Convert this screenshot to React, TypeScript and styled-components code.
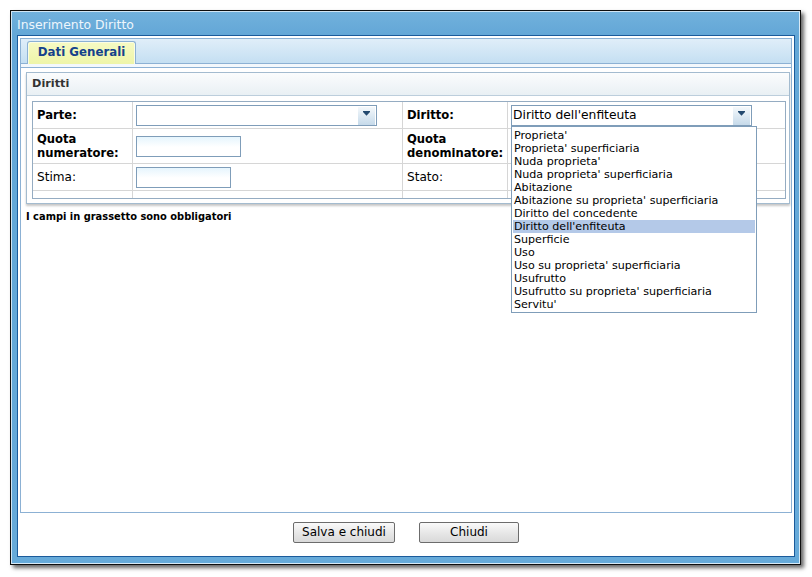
import React from "react";
import styled, { createGlobalStyle } from "styled-components";

const Global = createGlobalStyle`
  html, body { margin: 0; padding: 0; background: #ffffff; }
  body { font-family: "DejaVu Sans", Verdana, sans-serif; color: #000; }
  * { box-sizing: border-box; }
`;

const Page = styled.div`
  width: 812px;
  height: 577px;
  padding: 10px 0 0 10px;
  overflow: hidden;
`;

const Window = styled.div`
  width: 791px;
  height: 555px;
  border: 1px solid #0d0d0d;
  background: linear-gradient(to bottom, #72b1dc 0px, #63a7d7 24px, #66aad9 100%);
  box-shadow: 3px 3px 4px rgba(0, 0, 0, 0.6), inset 1px 1px 0 #d2e6f4,
    inset -1px -1px 0 #d8eaf6;
  padding: 0 5px 7px 6px;
  display: flex;
  flex-direction: column;
`;

const TitleBar = styled.div`
  height: 24px;
  padding-top: 3px;
  line-height: 21px;
  font-size: 12.4px;
  color: #eef6fc;
  white-space: nowrap;
`;

const Client = styled.div`
  flex: 1;
  background: #ffffff;
  border: 1px solid #1b5b9b;
  padding: 2px 2px 0 2px;
  display: flex;
  flex-direction: column;
`;

const TabPanel = styled.div`
  flex: 1;
  border: 1px solid #8cb1d4;
  display: flex;
  flex-direction: column;
`;

const TabStrip = styled.div`
  height: 25px;
  border-bottom: 1px solid #8cb1d4;
  background: linear-gradient(to bottom, #e0eef9, #c4dff2);
  padding-left: 6px;
  display: flex;
  align-items: flex-end;
`;

const Tab = styled.div`
  position: relative;
  z-index: 1;
  width: 109px;
  height: 23px;
  margin-bottom: -1px;
  border: 1px solid #8cb1d4;
  border-bottom: none;
  border-radius: 3px 3px 0 0;
  box-shadow: inset 1px 1px 0 #fbfde4, inset -1px 0 0 #fbfde4;
  background: linear-gradient(to bottom, #f6fac4, #eef5a8);
  color: #15428b;
  font-weight: bold;
  font-size: 11.8px;
  line-height: 21px;
  text-align: center;
`;

const StripSpacer = styled.div`
  height: 4px;
  background: #f3f8fc;
  border-bottom: 1px solid #8cb1d4;
`;

const Body = styled.div`
  flex: 1;
  padding: 4px 1px 0 5px;
  position: relative;
`;

const Fieldset = styled.div`
  border: 1px solid #a3bbcf;
  box-shadow: 0 2px 2px rgba(0, 0, 0, 0.22);
  background: #ffffff;
`;

const FieldsetHeader = styled.div`
  height: 23px;
  border-bottom: 1px solid #bccedc;
  background: linear-gradient(to bottom, #fbfcfd, #e9f0f4);
  padding-left: 5px;
  font-size: 11.3px;
  font-weight: bold;
  color: #333333;
  line-height: 22px;
`;

const TableWrap = styled.div`
  padding: 5px 3px 4px 5px;
`;

const FormGrid = styled.div`
  display: grid;
  grid-template-columns: 100px 270px 105px 277px;
  grid-template-rows: 27px 35px 27px 7px;
  border: 1px solid #95acc2;
`;

const Cell = styled.div<{ $lastCol?: boolean; $lastRow?: boolean; $pad?: number }>`
  display: flex;
  align-items: center;
  padding-left: ${(p) => p.$pad ?? 4}px;
  border-right: ${(p) => (p.$lastCol ? "none" : "1px solid #d6d6d6")};
  border-bottom: ${(p) => (p.$lastRow ? "none" : "1px solid #d6d6d6")};
  position: relative;
`;

const Label = styled.span<{ $bold?: boolean }>`
  font-size: ${(p) => (p.$bold ? "11.6px" : "12.1px")};
  font-weight: ${(p) => (p.$bold ? "bold" : "normal")};
  line-height: 14px;
  color: #000;
`;

const SelectBox = styled.div`
  position: relative;
  width: 241px;
  height: 21px;
  border: 1px solid #7f9db9;
  background: #ffffff;
  display: flex;
`;

const SelectText = styled.div`
  flex: 1;
  padding-left: 1px;
  font-size: 12.3px;
  line-height: 19px;
  white-space: nowrap;
`;

const ArrowButton = styled.div`
  width: 17px;
  margin: 1px 1px 0 0;
  height: 18px;
  background: linear-gradient(to bottom, #f4f8fb, #c6daea);
  display: flex;
  align-items: center;
  justify-content: center;
  padding-bottom: 5px;
`;

const TextInput = styled.div<{ $w: number }>`
  width: ${(p) => p.$w}px;
  height: 21px;
  border: 1px solid #7f9db9;
  background: linear-gradient(to bottom, #e6f5fd 0px, #ffffff 10px);
`;

const DropList = styled.div`
  position: absolute;
  left: -1px;
  top: 20px;
  z-index: 5;
  width: 246px;
  border: 1px solid #7f9db9;
  background: #ffffff;
  padding: 2px 1px 1px 1px;
`;

const DropItem = styled.div<{ $selected?: boolean }>`
  height: 13px;
  line-height: 13px;
  font-size: 11.1px;
  padding-left: 1px;
  white-space: nowrap;
  background: ${(p) => (p.$selected ? "#b4c9e8" : "transparent")};
`;

const Note = styled.div`
  margin-top: 7px;
  font-size: 9.9px;
  font-weight: bold;
  line-height: 12px;
`;

const ButtonBar = styled.div`
  height: 43px;
  padding-top: 9px;
  display: flex;
  justify-content: center;
  gap: 24px;
`;

const Button = styled.button<{ $w: number }>`
  width: ${(p) => p.$w}px;
  height: 21px;
  padding: 0;
  border: 1px solid #6c6c6c;
  border-radius: 2px;
  background: linear-gradient(to bottom, #fafafa, #e8e8e8 50%, #d9d9d9);
  font-family: "DejaVu Sans", Verdana, sans-serif;
  font-size: 12px;
  color: #000;
  line-height: 19px;
`;

const Arrow = () => (
  <svg width="7" height="5" viewBox="0 0 7 5">
    <rect x="0" y="0" width="7" height="1" fill="#23496f" />
    <polygon points="0,1 7,1 3.5,4.8" fill="#23496f" />
  </svg>
);

const options = [
  "Proprieta'",
  "Proprieta' superficiaria",
  "Nuda proprieta'",
  "Nuda proprieta' superficiaria",
  "Abitazione",
  "Abitazione su proprieta' superficiaria",
  "Diritto del concedente",
  "Diritto dell'enfiteuta",
  "Superficie",
  "Uso",
  "Uso su proprieta' superficiaria",
  "Usufrutto",
  "Usufrutto su proprieta' superficiaria",
  "Servitu'",
];

export default function App() {
  const selected = "Diritto dell'enfiteuta";
  return (
    <>
      <Global />
      <Page>
        <Window>
          <TitleBar>Inserimento Diritto</TitleBar>
          <Client>
            <TabPanel>
              <TabStrip>
                <Tab>Dati Generali</Tab>
              </TabStrip>
              <StripSpacer />
              <Body>
                <Fieldset>
                  <FieldsetHeader>Diritti</FieldsetHeader>
                  <TableWrap>
                    <FormGrid>
                      <Cell>
                        <Label $bold>Parte:</Label>
                      </Cell>
                      <Cell $pad={3}>
                        <SelectBox>
                          <SelectText />
                          <ArrowButton>
                            <Arrow />
                          </ArrowButton>
                        </SelectBox>
                      </Cell>
                      <Cell>
                        <Label $bold>Diritto:</Label>
                      </Cell>
                      <Cell $pad={3} $lastCol>
                        <SelectBox>
                          <SelectText>{selected}</SelectText>
                          <ArrowButton>
                            <Arrow />
                          </ArrowButton>
                          <DropList>
                            {options.map((o) => (
                              <DropItem key={o} $selected={o === selected}>
                                {o}
                              </DropItem>
                            ))}
                          </DropList>
                        </SelectBox>
                      </Cell>

                      <Cell>
                        <Label $bold>
                          Quota
                          <br />
                          numeratore:
                        </Label>
                      </Cell>
                      <Cell $pad={3}>
                        <TextInput $w={105} />
                      </Cell>
                      <Cell>
                        <Label $bold>
                          Quota
                          <br />
                          denominatore:
                        </Label>
                      </Cell>
                      <Cell $pad={3} $lastCol>
                        <TextInput $w={105} />
                      </Cell>

                      <Cell>
                        <Label>Stima:</Label>
                      </Cell>
                      <Cell $pad={3}>
                        <TextInput $w={95} />
                      </Cell>
                      <Cell>
                        <Label>Stato:</Label>
                      </Cell>
                      <Cell $pad={3} $lastCol />

                      <Cell $lastRow />
                      <Cell $lastRow />
                      <Cell $lastRow />
                      <Cell $lastRow $lastCol />
                    </FormGrid>
                  </TableWrap>
                </Fieldset>
                <Note>I campi in grassetto sono obbligatori</Note>
              </Body>
            </TabPanel>
            <ButtonBar>
              <Button $w={102}>Salva e chiudi</Button>
              <Button $w={100}>Chiudi</Button>
            </ButtonBar>
          </Client>
        </Window>
      </Page>
    </>
  );
}
